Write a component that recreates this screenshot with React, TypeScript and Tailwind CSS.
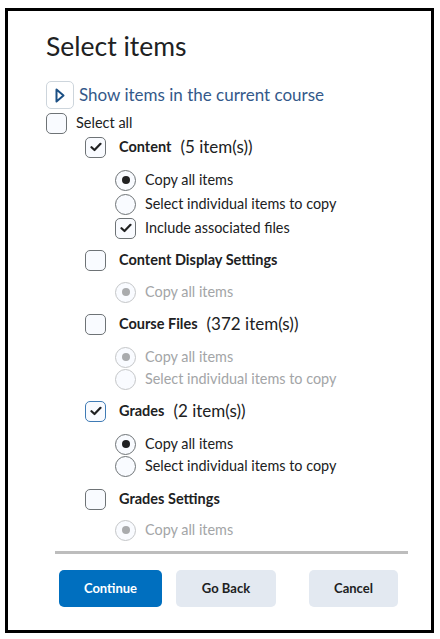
import { useState } from 'react';

type Opt = { label: string; kind: 'radio' | 'check'; on: boolean };
type Section = {
  name: string;
  count?: string;
  checked: boolean;
  focus?: boolean;
  headCls: string;
  optCls: string;
  options: Opt[];
};

const sections: Section[] = [
  {
    name: 'Content',
    count: '(5 item(s))',
    checked: true,
    headCls: 'mt-[2px]',
    optCls: 'mt-[11px] gap-[2px]',
    options: [
      { label: 'Copy all items', kind: 'radio', on: true },
      { label: 'Select individual items to copy', kind: 'radio', on: false },
      { label: 'Include associated files', kind: 'check', on: true },
    ],
  },
  {
    name: 'Content Display Settings',
    checked: false,
    headCls: 'mt-[10px]',
    optCls: 'mt-[10px]',
    options: [{ label: 'Copy all items', kind: 'radio', on: true }],
  },
  {
    name: 'Course Files',
    count: '(372 item(s))',
    checked: false,
    headCls: 'mt-[10px]',
    optCls: 'mt-[11px] gap-0',
    options: [
      { label: 'Copy all items', kind: 'radio', on: true },
      { label: 'Select individual items to copy', kind: 'radio', on: false },
    ],
  },
  {
    name: 'Grades',
    count: '(2 item(s))',
    checked: true,
    focus: true,
    headCls: 'mt-[10px]',
    optCls: 'mt-[11px] gap-0',
    options: [
      { label: 'Copy all items', kind: 'radio', on: true },
      { label: 'Select individual items to copy', kind: 'radio', on: false },
    ],
  },
  {
    name: 'Grades Settings',
    checked: false,
    headCls: 'mt-[11px]',
    optCls: 'mt-[9px]',
    options: [{ label: 'Copy all items', kind: 'radio', on: true }],
  },
];

function Check({ on, focus, disabled }: { on: boolean; focus?: boolean; disabled?: boolean }) {
  return (
    <span
      className={`w-[21px] h-[21px] shrink-0 rounded-[5px] border flex items-center justify-center bg-[#f9fbff] ${
        focus ? 'border-[#3f7bb5]' : disabled ? 'border-[#c4c6c8]' : 'border-[#6e7376]'
      }`}
    >
      {on && (
        <svg width="12" height="10" viewBox="0 0 12 10" fill="none">
          <path d="M1.5 5.2 L4.5 8 L10.5 1.8" stroke="#202122" strokeWidth="2.2" strokeLinecap="round" strokeLinejoin="round" />
        </svg>
      )}
    </span>
  );
}

function Radio({ on, disabled }: { on: boolean; disabled?: boolean }) {
  return (
    <span
      className={`w-[21px] h-[21px] shrink-0 rounded-full border flex items-center justify-center bg-[#f9fbff] ${
        disabled ? 'border-[#c4c6c8]' : 'border-[#6e7376]'
      }`}
    >
      {on && <span className={`w-[8px] h-[8px] rounded-full ${disabled ? 'bg-[#a9abad]' : 'bg-[#202122]'}`} />}
    </span>
  );
}

export default function App() {
  const [data] = useState(sections);

  return (
    <div className="w-[440px] h-[639px] bg-white pt-[8px] pl-[5px] font-['Lato','Liberation_Sans',sans-serif] text-[#202122]">
      <div className="w-[429px] h-[625px] border-[3px] border-black bg-white flex flex-col pl-[38px] pt-[20px]">
        <h1 className="text-[26.5px] leading-[31px] font-normal">Select items</h1>

        {/* Show items toggle */}
        <div className="flex items-center h-[28px] mt-[19px]">
          <span className="w-[28px] h-[28px] rounded-[5px] border border-[#cdd5dc] bg-white flex items-center justify-center">
            <svg width="10" height="15" viewBox="0 0 10 15" fill="none">
              <path d="M1.5 1.5 L8.5 7.5 L1.5 13.5 Z" stroke="#1b4f84" strokeWidth="2" strokeLinejoin="round" />
            </svg>
          </span>
          <span className="ml-[5px] text-[17px] text-[#34598a]">Show items in the current course</span>
        </div>

        {/* Select all */}
        <div className="flex items-center h-[22px] mt-[3px]">
          <Check on={false} />
          <span className="ml-[9px] text-[14.5px]">Select all</span>
        </div>

        <div className="flex flex-col pl-[39px]">
          {data.map((s) => (
            <div key={s.name} className={`flex flex-col ${s.headCls}`}>
              <div className="flex items-center h-[22px]">
                <Check on={s.checked} focus={s.focus} />
                <span className="ml-[13px] text-[14.5px] font-bold">{s.name}</span>
                {s.count && <span className="ml-[9px] text-[17px]">{s.count}</span>}
              </div>
              <div className={`flex flex-col pl-[30px] ${s.optCls}`}>
                {s.options.map((o) => {
                  const disabled = !s.checked;
                  return (
                    <div key={o.label} className="flex items-center h-[22px]">
                      {o.kind === 'radio' ? <Radio on={o.on} disabled={disabled} /> : <Check on={o.on} disabled={disabled} />}
                      <span className={`ml-[9px] text-[14.4px] ${disabled ? 'text-[#a3a5a7]' : 'text-[#202122]'}`}>{o.label}</span>
                    </div>
                  );
                })}
              </div>
            </div>
          ))}
        </div>

        <div className="h-[3px] bg-[#bdbdbd] w-[353px] ml-[9px] mt-[10px]" />

        <div className="flex items-center mt-[16px] ml-[13px]">
          <button className="w-[103px] h-[37px] rounded-[5px] bg-[#006fbf] text-white text-[13px] font-bold">Continue</button>
          <button className="w-[100px] h-[37px] rounded-[5px] bg-[#e3e9f1] text-[#202122] text-[13px] font-bold ml-[14px]">Go Back</button>
          <button className="w-[89px] h-[37px] rounded-[5px] bg-[#e3e9f1] text-[#202122] text-[13px] font-bold ml-[33px]">Cancel</button>
        </div>
      </div>
    </div>
  );
}
